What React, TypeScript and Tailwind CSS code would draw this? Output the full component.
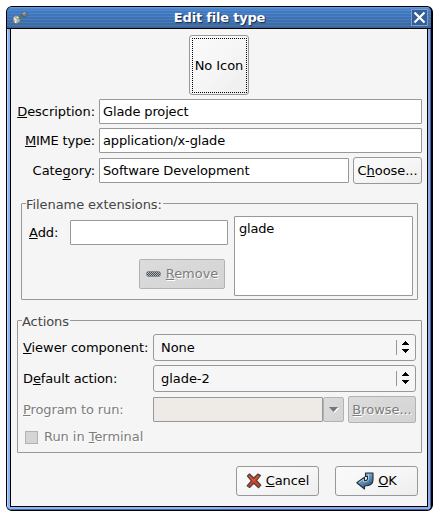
import React from "react";

type BoxProps = { className?: string; children?: React.ReactNode };

function Mnemonic({ children, low }: { children: string; low?: boolean }) {
  return (
    <span
      className={`underline decoration-1 [text-decoration-skip-ink:none] ${low ? "underline-offset-[4px]" : "underline-offset-[1px]"}`}
    >
      {children}
    </span>
  );
}

function Entry({ className = "", children }: BoxProps) {
  return (
    <div className={`flex h-[25px] items-center rounded-[1px] border border-[#989898] bg-white pl-[3px] tracking-[-0.13px] ${className}`}>
      {children}
    </div>
  );
}

function Button({ className = "", children }: BoxProps) {
  return (
    <button
      className={`flex shrink-0 items-center justify-center rounded-[3px] border border-[#989898] bg-linear-to-br from-[#fafafa] via-[#f6f6f6] to-[#ededed] ${className}`}
    >
      {children}
    </button>
  );
}

const disabledText = "text-[#7d7d7d] [text-shadow:1px_1px_0_#ffffff]";

function DisabledButton({ className = "", children }: BoxProps) {
  return (
    <button
      disabled
      className={`flex shrink-0 items-center justify-center rounded-[2px] border border-[#b2b2b2] bg-linear-to-br from-[#dcdcdc] to-[#d3d3d3] ${disabledText} ${className}`}
    >
      {children}
    </button>
  );
}

function OptionMenu({ children }: BoxProps) {
  return (
    <div className="flex h-[27px] w-[263px] items-center rounded-[3px] border border-[#989898] bg-[#f6f6f6] pl-[7px]">
      <span className="grow">{children}</span>
      <span className="h-[15px] w-px bg-[#989898]" />
      <svg className="mr-[6px] ml-[5px] h-[13px] w-[7px]" viewBox="0 0 7 13" shapeRendering="crispEdges">
        <path d="M3 0h1v1h1v1h1v1h1v1H0V3h1V2h1V1h1zM0 8h7v1H6v1H5v1H4v1H3v-1H2v-1H1V9H0z" fill="#000" />
      </svg>
    </div>
  );
}

function Panel({ className = "", title, children }: BoxProps & { title: string }) {
  return (
    <fieldset className={`relative rounded-[1px] border border-[#989898] ${className}`}>
      <div className="absolute -top-[7px] left-[4px] bg-[#f5f5f5] pr-px leading-4 tracking-[-0.07px] text-[#464646]">{title}</div>
      {children}
    </fieldset>
  );
}

function AppIcon() {
  return (
    <svg className="h-4 w-4" viewBox="0 0 16 16">
      <path d="M1 7l3-2 5 3-1 4-4 2-3-2z" fill="#a9aea9" stroke="#5d6768" strokeWidth=".7" />
      <path d="M2 8l2 2-.5 3M5 7l2 1" stroke="#eef0e9" strokeWidth="1.3" fill="none" />
      <path d="M7 9l4-4" stroke="#4b7d58" strokeWidth="2.4" />
      <path d="M10 3l3-1 2 1v3l-3 1-2-2z" fill="#737f80" stroke="#414e54" strokeWidth=".6" />
      <path d="M10.5 3.5l3-.8" stroke="#c8cfcb" />
    </svg>
  );
}

function TitleBar() {
  return (
    <div className="flex h-[22px] items-center border-b border-black bg-[repeating-linear-gradient(180deg,rgba(255,255,255,0.09)_0px_1px,transparent_1px_3px),linear-gradient(180deg,#5b97dc_0px,#427bc6_3px,#3c70b4_60%,#3a6599_100%)] pr-[3px] pl-[5px]">
      <AppIcon />
      <div className="grow text-center font-bold tracking-[-0.2px] text-white [text-shadow:1px_1px_1px_#14294a]">Edit file type</div>
      <div className="flex h-[17px] w-[17px] items-center justify-center border border-[#7b9fd0] bg-[#355e98]">
        <svg className="h-[13px] w-[13px]" viewBox="0 0 13 13">
          <path d="M1.500 1.500l10 10M11.500 1.500l-10 10" stroke="#fff" strokeWidth="2.2" />
        </svg>
      </div>
    </div>
  );
}

function MinusIcon() {
  return (
    <svg className="mr-[5px] h-[6px] w-[15px]" viewBox="0 0 15 6">
      <defs>
        <pattern id="stipple" width="2" height="2" patternUnits="userSpaceOnUse">
          <rect width="2" height="2" fill="#b8babb" />
          <path d="M0 0h1v1H0zM1 1h1v1H1z" fill="#454b50" shapeRendering="crispEdges" />
        </pattern>
      </defs>
      <rect x=".5" y=".5" width="14" height="5" rx="2" fill="url(#stipple)" stroke="#71767a" strokeWidth=".6" />
    </svg>
  );
}

function CancelIcon() {
  return (
    <svg className="mr-[4px] h-[16px] w-[16px]" viewBox="0 0 16 16">
      <path
        d="M1.500 3l2-2 4.300 4 4.200-4 2.500 1.500-4 5 4.300 4.700-2.200 2.500-4.700-4.500-4.300 4.300-2.500-1.700 4.300-5z"
        fill="#cf3f27"
        stroke="#4d4542"
        strokeWidth="1.200"
        strokeLinejoin="round"
      />
      <path d="M3 3.200l4.700 4.400L12.300 3" stroke="#e8705a" strokeWidth=".7" fill="none" />
    </svg>
  );
}

function OkIcon() {
  return (
    <svg className="mr-[4px] h-[18px] w-[18px]" viewBox="0 0 18 18">
      <defs>
        <linearGradient id="arrow" x1="0" y1="0" x2=".6" y2="1">
          <stop offset="0" stopColor="#b3cee4" />
          <stop offset=".5" stopColor="#6b97be" />
          <stop offset="1" stopColor="#2b5582" />
        </linearGradient>
      </defs>
      <path
        d="M9.500 1h7.500v7c0 3.500-2.500 5.800-8.500 6v3L.8 10.800l7.700-5.600v3.600c2 0 3-.5 3-2V4.500h-2z"
        fill="url(#arrow)"
        stroke="#202a36"
        strokeWidth="1.100"
        strokeLinejoin="round"
      />
      <path d="M2.600 10.600L7.500 7.200v2.600c3.600 0 5-.9 5-3V2.200" stroke="#c3d8ea" strokeWidth=".8" fill="none" />
    </svg>
  );
}

export default function App() {
  return (
    <div className="h-[516px] w-[438px] bg-white pt-[6px] pl-[6px] font-['DejaVu_Sans',sans-serif] text-[13px] leading-4 whitespace-nowrap text-black">
      <div className="flex h-[505px] w-[427px] flex-col overflow-hidden rounded-[6px] border border-r-2 border-black bg-[#3f72b8]">
        <TitleBar />
        <div className="flex grow bg-linear-to-r from-[#8bb6ef] from-50% to-[#8fadea] to-50% pr-[3px] pb-[3px] pl-[3px] shadow-[inset_-1px_-1px_0_#4169aa,inset_1px_0_0_#b3d2fb]">
          <main className="flex grow flex-col border-x border-b border-black bg-[#f5f5f5] pt-[6px] tracking-[-0.05px]">
            <Button className="ml-[178px] h-[60px] w-[60px]">
              <span className="flex h-[55px] w-[55px] items-center justify-center border border-dotted border-black pt-px">
                No Icon
              </span>
            </Button>

            <div className="mt-[4px] flex items-center">
              <label className="w-[88px] pr-[4px] text-right"><Mnemonic>D</Mnemonic>escription:</label>
              <Entry className="w-[323px]">Glade project</Entry>
            </div>
            <div className="mt-[4px] flex items-center">
              <label className="w-[88px] pr-[4px] text-right tracking-[-0.2px]"><Mnemonic>M</Mnemonic>IME type:</label>
              <Entry className="w-[323px]">application/x-glade</Entry>
            </div>
            <div className="mt-[4px] flex items-center">
              <label className="w-[88px] pr-[4px] text-right">Cate<Mnemonic low>g</Mnemonic>ory:</label>
              <Entry className="w-[250px]">Software Development</Entry>
              <Button className="ml-[4px] h-[27px] w-[69px]"><span>C<Mnemonic>h</Mnemonic>oose...</span></Button>
            </div>

            <Panel title="Filename extensions:" className="mt-[19px] ml-[10px] flex h-[97px] w-[397px] pt-[12px] pl-[7px]">
              <div className="mt-[4px] w-[205px]">
                <div className="flex items-center">
                  <label className="w-[41px]"><Mnemonic>A</Mnemonic>dd:</label>
                  <Entry className="w-[158px]" />
                </div>
                <DisabledButton className="mt-[14px] ml-[110px] h-[30px] w-[86px]">
                  <MinusIcon />
                  <span><Mnemonic>R</Mnemonic>emove</span>
                </DisabledButton>
              </div>
              <div className="h-[80px] w-[179px] rounded-[1px] border border-[#989898] bg-white pt-[4px] pl-[4px] tracking-[-0.2px]">glade</div>
            </Panel>

            <Panel title="Actions" className="mt-[20px] ml-[6px] h-[133px] w-[405px] pt-[13px] pl-[5px]">
              <div className="flex items-center">
                <label className="w-[130px]"><Mnemonic>V</Mnemonic>iewer component:</label>
                <OptionMenu>None</OptionMenu>
              </div>
              <div className="mt-[4px] flex items-center">
                <label className="w-[130px] tracking-[-0.12px]">D<Mnemonic>e</Mnemonic>fault action:</label>
                <OptionMenu>glade-2</OptionMenu>
              </div>
              <div className="mt-[4px] flex items-center">
                <label className={`w-[130px] tracking-[-0.12px] ${disabledText}`}><Mnemonic>P</Mnemonic>rogram to run:</label>
                <div className="h-[25px] w-[170px] rounded-[1px] border border-[#989898] bg-[#eeebe7]" />
                <DisabledButton className="h-[25px] w-[21px]">
                  <svg className="h-[6px] w-[10px]" viewBox="0 0 10 6">
                    <path d="M1 1h9L5.5 6z" fill="#fff" />
                    <path d="M0 0h9L4.500 5z" fill="#757575" />
                  </svg>
                </DisabledButton>
                <DisabledButton className="ml-[4px] h-[27px] w-[68px]"><span><Mnemonic>B</Mnemonic>rowse...</span></DisabledButton>
              </div>
              <label className={`mt-[6px] ml-[2px] flex items-center ${disabledText}`}>
                <span className="mt-px mr-[6px] h-[13px] w-[13px] border border-[#b2b2b2] bg-[#d5d5d5]" />
                <span>Run in <Mnemonic>T</Mnemonic>erminal</span>
              </label>
            </Panel>

            <div className="mt-[13px] flex justify-end gap-[16px] pr-[9px]">
              <Button className="h-[30px] w-[83px]"><CancelIcon /><span><Mnemonic>C</Mnemonic>ancel</span></Button>
              <Button className="h-[30px] w-[83px]"><OkIcon /><span><Mnemonic>O</Mnemonic>K</span></Button>
            </div>
          </main>
        </div>
      </div>
    </div>
  );
}
